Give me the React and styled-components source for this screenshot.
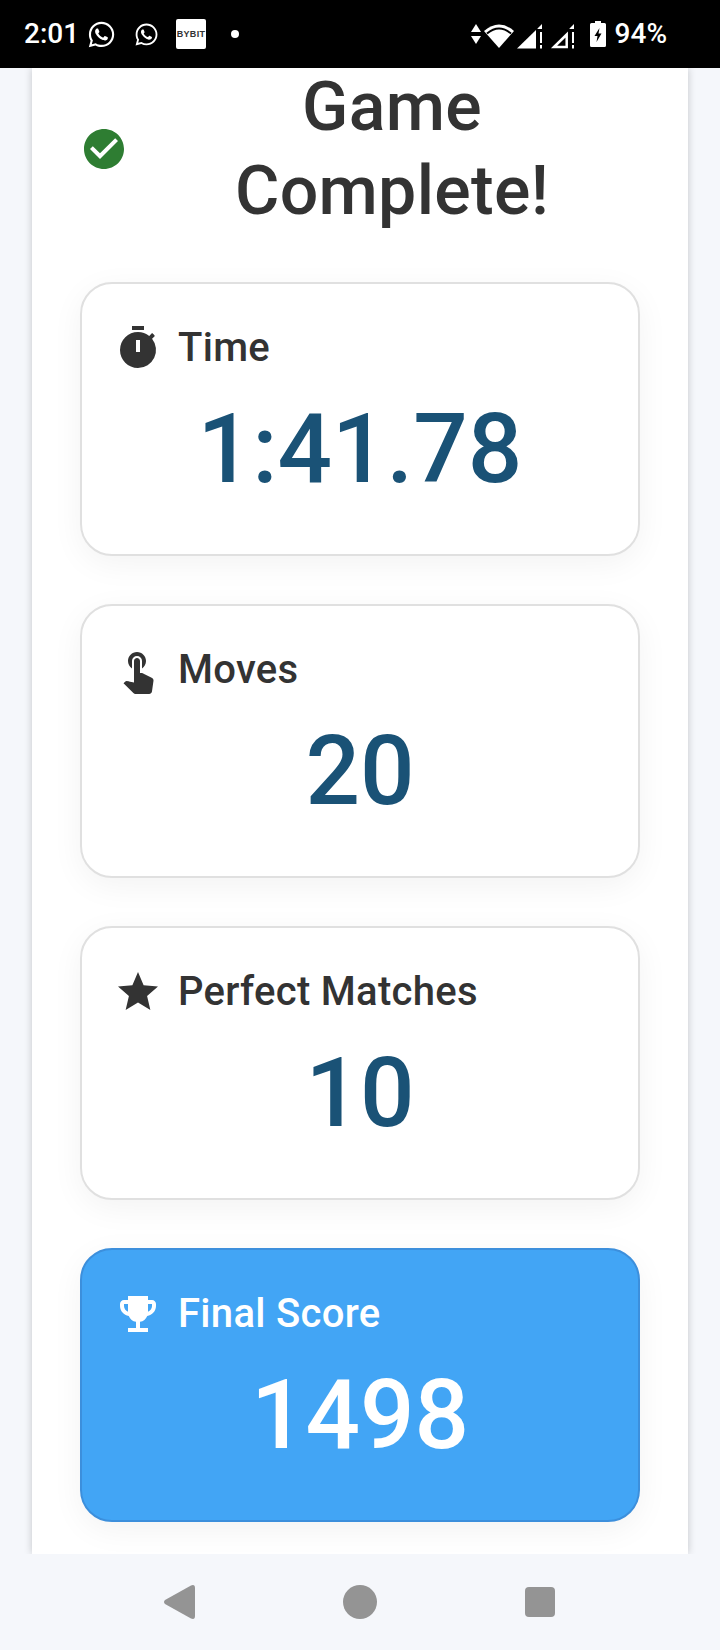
import styled, { createGlobalStyle } from "styled-components";
import { MdCheckCircle, MdTimer, MdTouchApp, MdStar, MdEmojiEvents } from "react-icons/md";
import { FaWhatsapp } from "react-icons/fa";

const GlobalStyle = createGlobalStyle`
  * {
    box-sizing: border-box;
  }
  html, body {
    margin: 0;
    padding: 0;
    background: #f5f7fb;
    font-family: Roboto, "Liberation Sans", sans-serif;
  }
`;

const Screen = styled.div`
  width: 720px;
  height: 1650px;
  display: flex;
  flex-direction: column;
  overflow: hidden;
  background: #f5f7fb;
`;

const StatusBar = styled.header`
  height: 68px;
  flex: none;
  background: #000;
  color: #fff;
  display: flex;
  align-items: center;
  justify-content: space-between;
  padding: 0 53px 0 24px;
  font-size: 28px;
  font-weight: 500;
  line-height: 1;
  position: relative;
  z-index: 2;
`;

const StatusGroup = styled.div`
  display: flex;
  align-items: center;
`;

const StatusTime = styled.span`
  width: 63px;
`;

const ByBit = styled.span`
  width: 30px;
  height: 30px;
  margin-left: 17px;
  border-radius: 2px;
  background: #fff;
  color: #333;
  font-family: "Liberation Sans", sans-serif;
  font-size: 9px;
  font-weight: 700;
  letter-spacing: 0.3px;
  display: flex;
  align-items: center;
  justify-content: center;
`;

const Dot = styled.span`
  width: 8px;
  height: 8px;
  margin-left: 25px;
  border-radius: 50%;
  background: #fff;
`;

const Percent = styled.span`
  margin-left: 9px;
`;

const Panel = styled.main`
  flex: 1;
  min-height: 0;
  width: 656px;
  margin: 0 32px;
  padding: 0 48px;
  background: #fff;
  box-shadow: 0 0 8px rgba(0, 0, 0, 0.2);
  overflow: hidden;
`;

const TitleRow = styled.div`
  display: flex;
  align-items: center;
  gap: 16px;
  margin-top: -3px;
  margin-bottom: 49px;
  color: #2e7d32;
`;

const Title = styled.h1`
  flex: 1;
  margin: 0;
  padding: 0 70px;
  color: #333;
  font-size: 68px;
  font-weight: 500;
  letter-spacing: 0.3px;
  line-height: 84px;
  text-align: center;
`;

const CardList = styled.div`
  display: flex;
  flex-direction: column;
  gap: 48px;
`;

const Card = styled.section`
  padding: 34px 32px 33px;
  border: 2px solid ${(p) => (p.$highlight ? "#3c8fdc" : "#e0e0e0")};
  border-radius: 32px;
  background: ${(p) => (p.$highlight ? "#42a5f5" : "#fff")};
  color: ${(p) => (p.$highlight ? "#fff" : "#333")};
  box-shadow: 0 8px 32px rgba(0, 0, 0, 0.05);
`;

const CardHeader = styled.div`
  display: flex;
  align-items: center;
  gap: 16px;
  font-size: 40px;
  font-weight: 500;
  letter-spacing: 0.3px;
  line-height: 59px;
`;

const CardValue = styled.div`
  color: ${(p) => (p.$highlight ? "#fff" : "#1a5276")};
  font-size: 96px;
  font-weight: 500;
  line-height: 144px;
  text-align: center;
`;

const NavBar = styled.nav`
  height: 96px;
  flex: none;
  background: #f5f7fb;
  position: relative;
  z-index: 2;
  display: flex;
  align-items: center;
  padding-left: 164px;
`;

const NavCircle = styled.span`
  width: 34px;
  height: 34px;
  margin-left: 148px;
  border-radius: 50%;
  background: #949494;
`;

const NavSquare = styled.span`
  width: 30px;
  height: 30px;
  margin-left: 148px;
  border-radius: 4px;
  background: #949494;
`;

const stats = [
  { label: "Time", value: "1:41.78", Icon: MdTimer },
  { label: "Moves", value: "20", Icon: MdTouchApp },
  { label: "Perfect Matches", value: "10", Icon: MdStar },
  { label: "Final Score", value: "1498", Icon: MdEmojiEvents, highlight: true },
];

const App = () => {
  return (
    <Screen>
      <GlobalStyle />
      <StatusBar>
        <StatusGroup>
          <StatusTime>2:01</StatusTime>
          <FaWhatsapp size={29} />
          <FaWhatsapp size={25} style={{ marginLeft: 18 }} />
          <ByBit>BYBIT</ByBit>
          <Dot />
        </StatusGroup>
        <StatusGroup>
          <svg width="104" height="30" viewBox="0 0 104 30" fill="#fff">
            <path d="M5 5l5 8H0zM5 25l-5-8h10z" />
            <path d="M13 12Q28 -1 43 12L28 29z" />
            <path d="M16 14.500Q28 4.500 40 14.500" fill="none" stroke="#000" strokeWidth="2" />
            <path d="M46 29.500L65 10.900V29.500z" />
            <path d="M66.500 9.400L71 5V10H66.500z" />
            <path d="M69 13h2v11h-2zM69 26h2v3.500h-2z" />
            <path
              d="M83 28L95.700 15.500V28z"
              fill="none"
              stroke="#fff"
              strokeWidth="2.500"
            />
            <path d="M98.500 9.400L103 5V10H98.500z" />
            <path d="M101 13h2v11h-2zM101 26h2v3.500h-2z" />
          </svg>
          <svg width="16" height="26" viewBox="0 0 16 26" fill="#fff" style={{ marginLeft: 15 }}>
            <path d="M5 0h6v2h3.500A1.500 1.500 0 0 1 16 3.500V24.500A1.500 1.500 0 0 1 14.500 26H1.500A1.500 1.500 0 0 1 0 24.500V3.500A1.500 1.500 0 0 1 1.500 2H5z" />
            <path d="M9.500 7L4.500 15h3L6.500 21l5-8.500h-3z" fill="#000" />
          </svg>
          <Percent>94%</Percent>
        </StatusGroup>
      </StatusBar>
      <Panel>
        <TitleRow>
          <MdCheckCircle size={48} />
          <Title>Game Complete!</Title>
        </TitleRow>
        <CardList>
          {stats.map(({ label, value, Icon, highlight }) => (
            <Card key={label} $highlight={highlight}>
              <CardHeader>
                <Icon size={48} />
                {label}
              </CardHeader>
              <CardValue $highlight={highlight}>{value}</CardValue>
            </Card>
          ))}
        </CardList>
      </Panel>
      <NavBar>
        <svg width="31" height="34" viewBox="0 0 31 34" fill="#949494">
          <path d="M1 15L27 0.500Q31 -1 31 3V31Q31 35 27 33.500L1 19Q-1 17 1 15z" />
        </svg>
        <NavCircle />
        <NavSquare />
      </NavBar>
    </Screen>
  );
};

export default App;
